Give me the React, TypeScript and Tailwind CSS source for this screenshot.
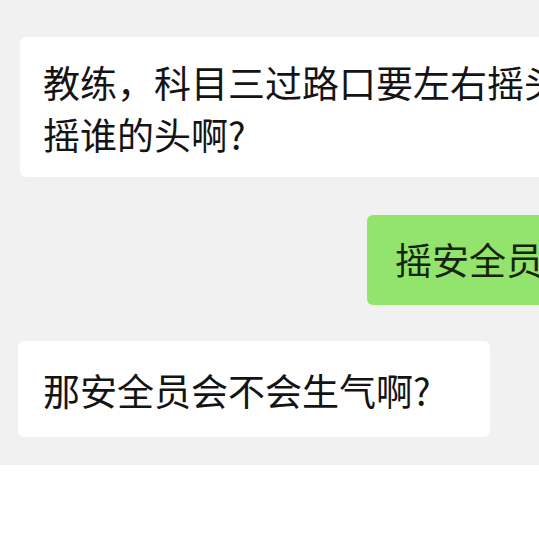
export default function App() {
  const font = { fontFamily: '"Noto Sans CJK SC", "Noto Sans", sans-serif' };
  return (
    <div className="w-[539px] h-[539px] overflow-hidden bg-white" style={font}>
      <div className="w-[539px] h-[465px] bg-[#f1f1f1] pt-[37px] flex flex-col items-start">
        <div className="ml-[20px] w-[620px] shrink-0 bg-white rounded-[6px] pl-[23px] pt-[19px] pb-[17px] text-[37px] leading-[52px] text-[#141414] whitespace-nowrap">
          <div>教练，科目三过路口要左右摇头，</div>
          <div>摇谁的头啊?</div>
        </div>
        <div className="mt-[38px] ml-[367px] w-[300px] shrink-0 bg-[#93e46c] rounded-[6px] pl-[28px] pt-[18px] pb-[20px] text-[37px] leading-[52px] text-[#16240e] whitespace-nowrap">
          摇安全员的头
        </div>
        <div className="mt-[36px] ml-[18px] w-[472px] shrink-0 bg-white rounded-[6px] pl-[25px] pt-[23px] pb-[21px] text-[37px] leading-[52px] text-[#141414] whitespace-nowrap">
          那安全员会不会生气啊?
        </div>
      </div>
    </div>
  );
}
